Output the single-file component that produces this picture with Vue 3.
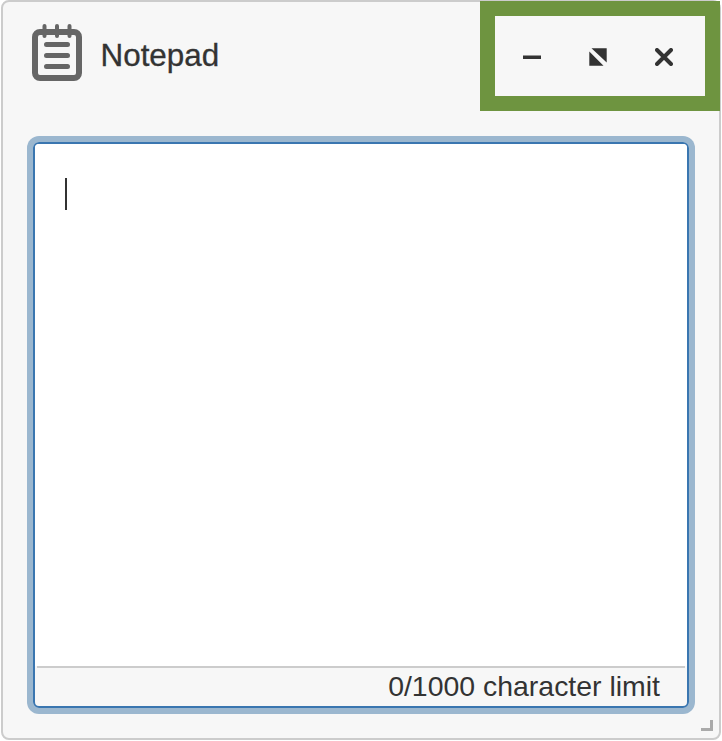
<script setup>
const limit = 1000
const count = 0
</script>

<template>
  <div class="window">
    <header class="header">
      <svg class="logo" width="50" height="58" viewBox="0 0 50 58" aria-hidden="true">
        <rect x="3" y="8" width="44" height="46" rx="5" fill="none" stroke="#666" stroke-width="6" />
        <path d="M12.500 2v10M25 2v10M37.500 2v10" stroke="#666" stroke-width="4" stroke-linecap="round" fill="none" />
        <path d="M14.500 20.500h21M14.500 31.500h21M14.500 42.500h21" stroke="#666" stroke-width="5" stroke-linecap="round" fill="none" />
      </svg>
      <h1 class="title">Notepad</h1>
      <div class="controls">
        <button class="control" aria-label="Minimize">
          <svg width="18" height="18" viewBox="0 0 18 18"><rect x="0" y="7.500" width="18" height="3.500" fill="#333" /></svg>
        </button>
        <button class="control" aria-label="Expand">
          <svg width="18" height="18" viewBox="0 0 18 18">
            <path d="M2.500 .300H17.700V14.500Z M.300 3.500V17.700H14.500Z" fill="#333" />
          </svg>
        </button>
        <button class="control" aria-label="Close">
          <svg width="18" height="18" viewBox="0 0 18 18">
            <path d="M2 2L16 16M16 2L2 16" stroke="#333" stroke-width="4" stroke-linecap="round" fill="none" />
          </svg>
        </button>
      </div>
    </header>
    <main class="body">
      <div class="box">
        <div class="editor"><span class="caret"></span></div>
        <div class="footer">{{ count }}/{{ limit }} character limit</div>
      </div>
    </main>
    <span class="grip"></span>
  </div>
</template>

<style>
html, body { margin: 0; background: #fff; }
</style>

<style scoped>
.window {
  position: relative;
  box-sizing: border-box;
  width: 720px;
  height: 740px;
  margin-left: 1px;
  display: flex;
  flex-direction: column;
  background: #f7f7f7;
  border: 2px solid #ccc;
  border-radius: 8px;
  font-family: "Liberation Sans", Arial, sans-serif;
  color: #333;
}
.header {
  flex: none;
  height: 110px;
  display: flex;
  align-items: flex-start;
  padding-left: 29px;
}
.logo { flex: none; margin-top: 22px; }
.title {
  margin: 36px 0 0 18.500px;
  font-size: 31.400px;
  line-height: 36px;
  font-weight: 400;
  -webkit-text-stroke: 0.3px #333;
}
.controls {
  box-sizing: border-box;
  width: 240px;
  height: 110px;
  margin: -1px -1px 0 auto;
  border: 15px solid #6e9440;
  display: flex;
  justify-content: center;
  align-items: center;
  padding: 2px 4px 0 0;
}
.control {
  width: 66px;
  height: 60px;
  padding: 0;
  border: 0;
  background: none;
  display: flex;
  align-items: center;
  justify-content: center;
}
.body {
  flex: 1;
  min-height: 0;
  display: flex;
  padding: 30px;
}
.box {
  flex: 1;
  display: flex;
  flex-direction: column;
  border: 2px solid #3a76b0;
  border-radius: 6px;
  box-shadow: 0 0 0 6px #9bb7cf;
  overflow: hidden;
}
.editor {
  flex: 1;
  background: #fff;
  padding: 34px 30px;
}
.caret {
  display: block;
  width: 2px;
  height: 32px;
  background: #333;
}
.footer {
  flex: none;
  height: 38px;
  margin: 0 2px;
  border-top: 2px solid #ccc;
  padding-right: 25px;
  text-align: right;
  font-size: 28.450px;
  line-height: 36px;
  color: #333;
}
.grip {
  position: absolute;
  right: 6px;
  bottom: 7px;
  width: 9px;
  height: 8px;
  border-right: 3px solid #aaa;
  border-bottom: 3px solid #aaa;
}
</style>
